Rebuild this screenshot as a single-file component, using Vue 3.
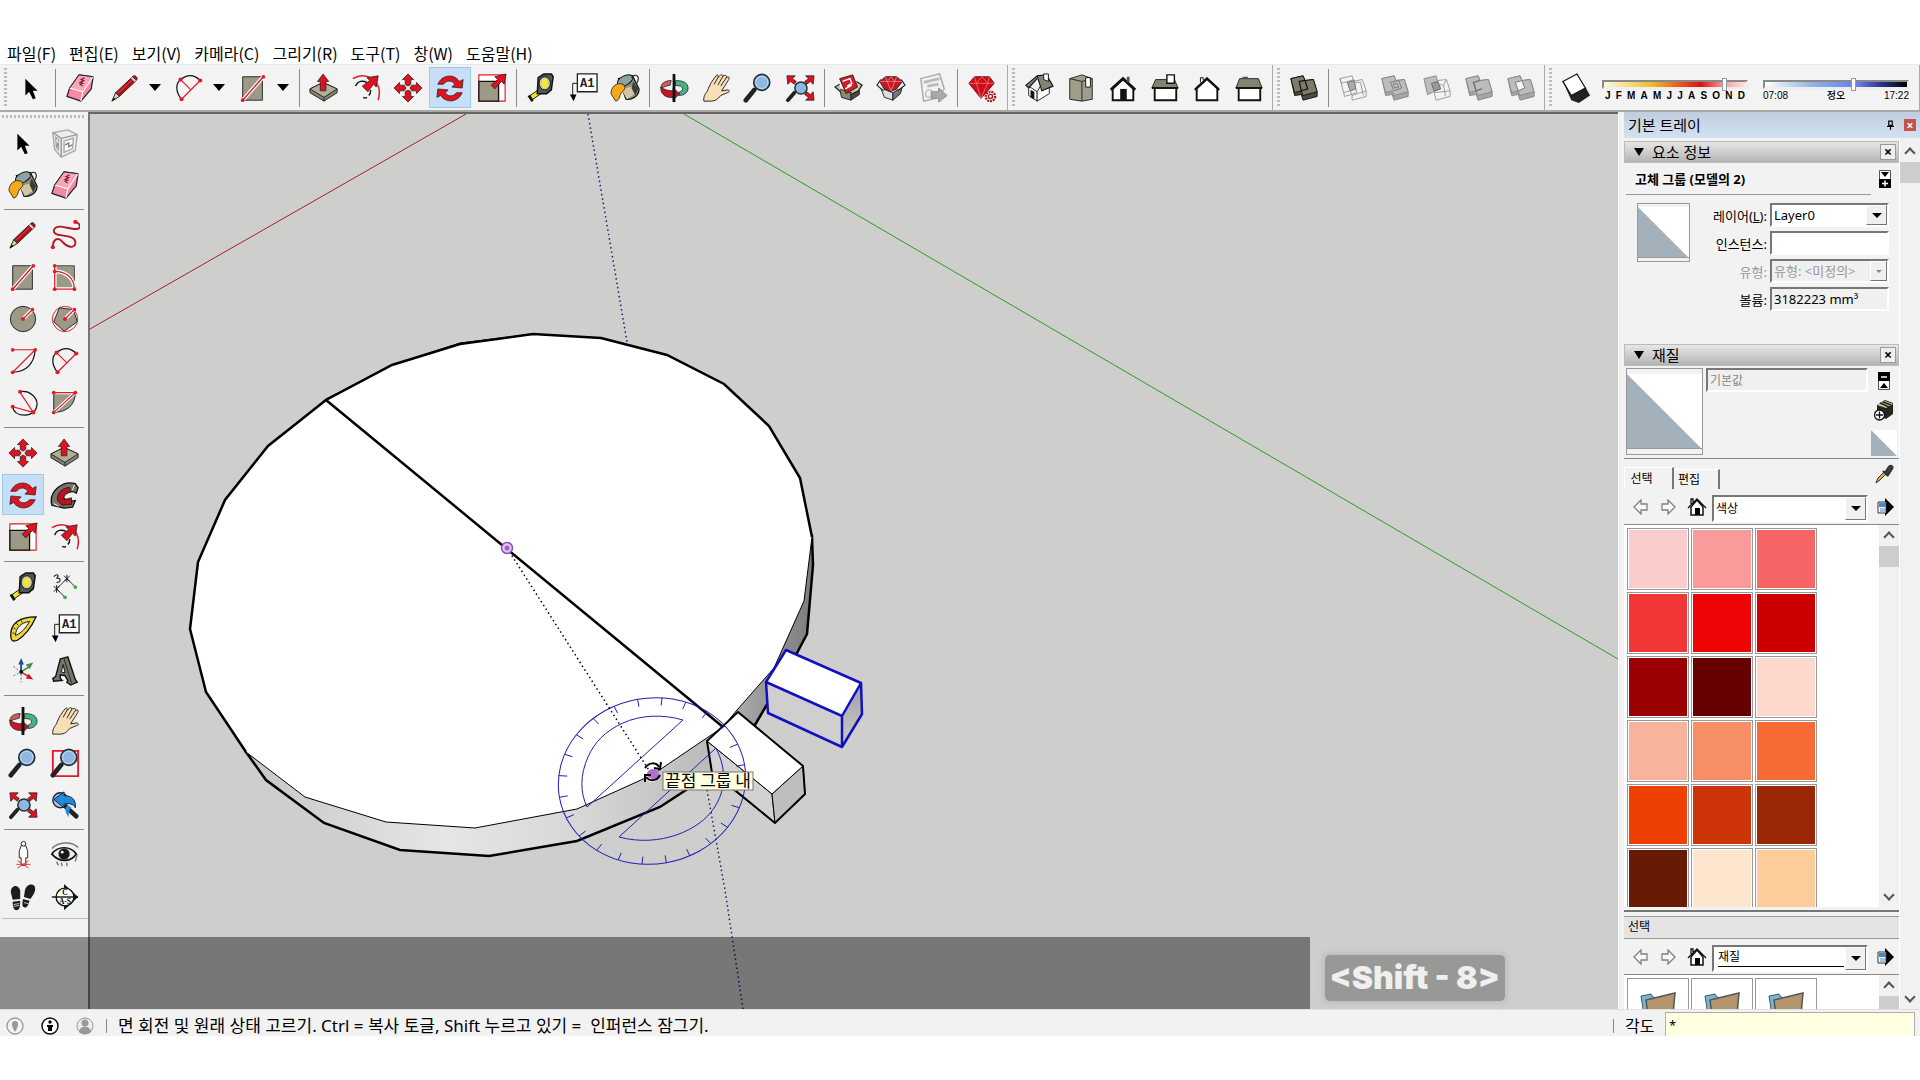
<template>
  <div class="app">
    <!-- Icon sprite, every symbol drawn on a 32x32 grid -->
    <svg class="sprite" aria-hidden="true">
      <symbol id="i-select" viewBox="0 0 32 32">
        <path d="M10 6v18l4-4 4 8 3-1-3-8h5z" fill="#000" />
      </symbol>
      <symbol id="i-eraser" viewBox="0 0 32 32">
        <path d="M15 2 30 4 28 17 17 30 2 25 5 16z" fill="#f58aa5" stroke="#222" stroke-width="1.300" stroke-linejoin="round" />
        <path d="M15 2 30 4 19 20 5 16z" fill="#f9a5ba" />
        <path d="M5 16 19 20 30 4M19 20 17 30" fill="none" stroke="#fff" stroke-width="1.200" />
        <path d="M5 16 15 2 30 4" fill="none" stroke="#222" />
        <path d="m21 5-4 2 3 1-4 2 3 1-3 1 3 2" fill="none" stroke="#7a1c30" stroke-width="1.200" />
      </symbol>
      <symbol id="i-pencil" viewBox="0 0 32 32">
        <path d="M24 4c2-3 7 1 4 4L10 25l-4-4z" fill="#b4121b" stroke="#222" />
        <path d="m6 21-4 9 8-5z" fill="#e4cfa4" stroke="#222" />
        <path d="m2 30 2-4 2 2z" fill="#111" />
        <path d="m23 5 4 4" stroke="#ddd" stroke-width="2" />
        <path d="M8 22 23 8" stroke="#e8494c" />
      </symbol>
      <symbol id="i-freehand" viewBox="0 0 32 32">
        <path d="M3 29c0-9 6-11 10-6 5 6 13 8 14 2 1-7-9-8-17-9C1 15 3 7 11 7c6 0 20 6 21 0 0-3-2-4-5-5" fill="none" stroke="#b01722" stroke-width="2" />
        <circle cx="3" cy="29" r="2.200" fill="#e01b2a" /><circle cx="27" cy="2" r="2.200" fill="#e01b2a" />
      </symbol>
      <symbol id="i-rect" viewBox="0 0 32 32">
        <path d="M5 4h21v25H5z" fill="#9c9a86" stroke="#222" />
        <path d="M5 29 27 4" stroke="#fff" stroke-width="4" /><path d="M5 29 27 4" stroke="#e01b2a" stroke-width="1.500" />
        <circle cx="5" cy="29" r="2" fill="#e01b2a" /><circle cx="27" cy="4" r="2" fill="#e01b2a" />
      </symbol>
      <symbol id="i-rotrect" viewBox="0 0 32 32">
        <path d="M5 4h21v25H5z" fill="#9c9a86" stroke="#444" />
        <path d="M5 4v25h21c0-12-9-19-21-19" fill="none" stroke="#fff" stroke-width="4" />
        <path d="M5 4v25h21c0-12-9-19-21-19" fill="none" stroke="#e01b2a" stroke-width="1.300" />
        <g fill="#e01b2a"><circle cx="5" cy="4" r="2" /><circle cx="5" cy="10" r="2" /><circle cx="5" cy="29" r="2" /><circle cx="26" cy="29" r="2" /></g>
      </symbol>
      <symbol id="i-circle" viewBox="0 0 32 32">
        <circle cx="16" cy="16" r="13.500" fill="#9c9a86" stroke="#222" />
        <path d="m16 16 10-10" stroke="#fff" stroke-width="4" /><path d="m16 16 10-10" stroke="#e01b2a" stroke-width="1.500" />
        <circle cx="16" cy="16" r="2.200" fill="#e01b2a" /><circle cx="26" cy="6" r="2" fill="#e01b2a" />
      </symbol>
      <symbol id="i-polygon" viewBox="0 0 32 32">
        <circle cx="16" cy="16" r="13.500" fill="none" stroke="#e01b2a" />
        <path d="M10 4 25 6l4 13-14 10L4 19z" fill="#9c9a86" stroke="#222" />
        <path d="m16 16 10-10" stroke="#fff" stroke-width="4" /><path d="m16 16 10-10" stroke="#e01b2a" stroke-width="1.500" />
        <circle cx="16" cy="16" r="2.200" fill="#e01b2a" /><circle cx="26" cy="6" r="2" fill="#e01b2a" />
      </symbol>
      <symbol id="i-arc" viewBox="0 0 32 32">
        <path d="M29 4C28 18 20 28 5 28" fill="none" stroke="#111" stroke-width="1.300" />
        <path d="M5 4h24L5 28" fill="none" stroke="#e01b2a" stroke-width="1.300" />
        <g fill="#e01b2a"><circle cx="5" cy="4" r="2" /><circle cx="29" cy="4" r="2" /><circle cx="5" cy="28" r="2" /></g>
      </symbol>
      <symbol id="i-arc2" viewBox="0 0 32 32">
        <path d="M8 28C1 19 2 11 7 7s13-7 21 1" fill="none" stroke="#111" stroke-width="1.300" />
        <path d="M8 28 28 8M7 7l11 11" stroke="#e01b2a" stroke-width="1.300" />
        <g fill="#e01b2a"><circle cx="7" cy="7" r="2.200" /><circle cx="28" cy="8" r="2.200" /><circle cx="8" cy="28" r="2.200" /></g>
      </symbol>
      <symbol id="i-arc3" viewBox="0 0 32 32">
        <path d="M13 4c10-2 18 6 18 13S25 29 18 29 6 26 5 20" fill="none" stroke="#111" stroke-width="1.300" />
        <path d="m13 5 14 21-22-6" fill="none" stroke="#e01b2a" stroke-width="1.300" />
        <g fill="#e01b2a"><circle cx="13" cy="4" r="2.200" /><circle cx="27" cy="26" r="2.200" /><circle cx="5" cy="20" r="2.200" /></g>
      </symbol>
      <symbol id="i-pie" viewBox="0 0 32 32">
        <path d="M4 5h23C27 18 18 26 4 26z" fill="#9c9a86" stroke="#222" />
        <path d="M4 26 27 5H4" fill="none" stroke="#fff" stroke-width="3.500" /><path d="M4 26 27 5H4" fill="none" stroke="#e01b2a" stroke-width="1.300" />
        <g fill="#e01b2a"><circle cx="4" cy="5" r="2" /><circle cx="27" cy="5" r="2" /><circle cx="4" cy="26" r="2" /></g>
      </symbol>
      <symbol id="i-push" viewBox="0 0 32 32">
        <path d="m1 17 14-7 15 7v4L16 30 1 21z" fill="#85836f" stroke="#222" stroke-linejoin="round" />
        <path d="m1 17 14-7 15 7-14 9z" fill="#b0ae99" stroke="#222" stroke-linejoin="round" /><path d="M16 26v4" stroke="#222" />
        <path d="M12 19V9H9l6-8 6 8h-3v10z" fill="#e01220" stroke="#222" stroke-width="0.800" />
      </symbol>
      <symbol id="i-offset" viewBox="0 0 32 32">
        <path d="M2 6C16-3 35 8 29 29" fill="none" stroke="#e01b2a" stroke-width="1.600" />
        <path d="M5 14c2-6 8-6 12-4M19 24c2-2 2-4 2-6M13 26c2 1 3 1 4 0" fill="none" stroke="#111" stroke-width="1.500" />
        <path d="m12 14 8-6-3-3 12-2-2 12-3-3-6 8z" fill="#e01220" stroke="#222" stroke-width="0.800" />
      </symbol>
      <symbol id="i-move" viewBox="0 0 32 32">
        <g fill="#e01220" stroke="#222" stroke-width="0.800">
          <path id="mv" d="M13 12V7h-3l6-6 6 6h-3v5l-3 2z" />
          <use href="#mv" transform="rotate(90 16 16)" /><use href="#mv" transform="rotate(180 16 16)" /><use href="#mv" transform="rotate(270 16 16)" />
        </g>
      </symbol>
      <symbol id="i-rotate" viewBox="0 0 32 32">
        <g fill="#e01220" stroke="#222" stroke-width="0.800" stroke-linejoin="round">
          <path id="rt" d="M3 12C7 2 20 0 26 9l4-2-1 9-11-1 3-3c-3-5-9-4-12 0z" /><use href="#rt" transform="rotate(180 16 16.500)" />
        </g>
      </symbol>
      <symbol id="i-scale" viewBox="0 0 32 32">
        <path d="M2 2h28v28H2z" fill="#fff" stroke="#e01b2a" stroke-width="1.200" />
        <path d="M2 9h21v21H2z" fill="#9c9a86" stroke="#111" stroke-width="1.400" />
        <path d="m15 13 7-6-3-3 12-3-2 11-3-3-7 8z" fill="#e01220" stroke="#222" stroke-width="0.800" />
      </symbol>
      <symbol id="i-follow" viewBox="0 0 32 32">
        <path d="M2 27C-2 12 14 0 27 4l3 4-2 6c-6-4-14 1-14 5l6 4 7-1-3 7-9 1z" fill="#77756a" stroke="#111" stroke-width="1.400" />
        <path d="M8 22c-1-8 5-14 13-14l1 5c-5 1-8 4-7 8l8-2v7l-10 1z" fill="#b8141f" stroke="#111" stroke-width="0.800" />
        <path d="M4 25 9 28M26 5l-2 6" stroke="#fff" />
      </symbol>
      <symbol id="i-tape" viewBox="0 0 32 32">
        <path d="m3 25 13-9 3 4L6 29z" fill="#f2e02c" stroke="#111" /><path d="m3 24 4 6" stroke="#111" stroke-width="3" />
        <path d="M13 5 19 1h8l2 3-2 14-5 4H12z" fill="#55554c" stroke="#111" stroke-width="1.600" />
        <ellipse cx="20" cy="11" rx="6" ry="7" fill="#c8c8b8" stroke="#111" /><ellipse cx="20" cy="11" rx="3.500" ry="5" fill="#f5e62e" />
      </symbol>
      <symbol id="i-text" viewBox="0 0 32 32">
        <path d="M10 1h21v19H10z" fill="#fff" stroke="#222" stroke-width="1.400" />
        <path d="M10 11H5v14" fill="none" stroke="#111" /><path d="M2 23h7l-3 7z" fill="#000" />
        <text x="20.500" y="15" text-anchor="middle" font-family="Liberation Mono, monospace" font-size="13" font-weight="bold" fill="#222">A1</text>
      </symbol>
      <symbol id="i-paint" viewBox="0 0 32 32">
        <path d="m9 6 15-3 7 14c0 8-8 12-14 11z" fill="#8f8d7d" stroke="#111" stroke-width="1.300" />
        <path d="m12 17 13-3 2 8-9 6z" fill="#d3c7a1" /><path d="m25 9 5 8-3 7-4-8z" fill="#3b3b38" />
        <ellipse cx="16" cy="8" rx="9" ry="5" transform="rotate(-28 16 8)" fill="#8da3a3" stroke="#111" />
        <path d="M14 12C6 9 1 16 1 22l5 8c5-1 4-7 7-10 3-2 4-5 1-8z" fill="#f6a81b" stroke="#111" stroke-width="0.800" />
        <path d="M23 5c5-6 10-1 5 7" fill="none" stroke="#222" stroke-width="1.200" />
      </symbol>
      <symbol id="i-orbit" viewBox="0 0 32 32">
        <path d="M18 8c8 0 13 3 13 8s-4 8-10 8l1-4c4-1 4-4 1-6l-6-1z" fill="#4fae7d" stroke="#123" stroke-width="0.800" />
        <path d="M13 8C5 8 2 12 2 16l6-2 4-1z" fill="#cd5a5e" stroke="#222" stroke-width="0.800" />
        <path d="M2 15c-1 8 6 12 13 11v3l7-7-7-6v3c-5 0-9-1-13-4z" fill="#c4152a" stroke="#222" stroke-width="0.800" />
        <path d="M16 1v30" stroke="#111" stroke-width="3" />
      </symbol>
      <symbol id="i-pan" viewBox="0 0 32 32">
        <path d="M3 30c-1-7 4-9 5-14l3-6 5-7c2-2 3 0 2 2 3-4 6-4 5-1 3-3 5-1 4 1 3-2 4 0 2 3l-7 11 7-1c2 1 1 3-1 3l-7 3c-3 4-6 6-10 6z" fill="#f7deb5" stroke="#222" />
        <path d="m18 5-4 7M23 4l-5 9M27 5l-6 9" stroke="#222" fill="none" />
      </symbol>
      <symbol id="i-zoom" viewBox="0 0 32 32">
        <path d="m3 29 9-11" stroke="#222" stroke-width="5" stroke-linecap="round" /><path d="m11 19 3-3" stroke="#222" stroke-width="2" />
        <circle cx="20" cy="10" r="8.500" fill="#8fb7df" stroke="#20303c" stroke-width="1.800" /><circle cx="20" cy="10" r="6.500" fill="none" stroke="#c5dcf2" />
      </symbol>
      <symbol id="i-zoomwin" viewBox="0 0 32 32">
        <path d="M3 3h27v27H3z" fill="none" stroke="#e01b2a" stroke-width="2" />
        <use href="#i-zoom" width="32" height="32" />
      </symbol>
      <symbol id="i-extents" viewBox="0 0 32 32">
        <path d="m3 29 7-8" stroke="#222" stroke-width="4" stroke-linecap="round" />
        <circle cx="17" cy="16" r="6.500" fill="#8fb7df" stroke="#20303c" stroke-width="1.600" />
        <g fill="#e01220" stroke="#222" stroke-width="0.800">
          <path id="ex" d="m21 9 4-3-3-3h9l-1 9-3-3-4 3z" /><use href="#ex" transform="matrix(-1 0 0 1 33 0)" /><use href="#ex" transform="matrix(1 0 0 -1 0 32)" />
        </g>
      </symbol>
      <symbol id="i-prev" viewBox="0 0 32 32">
        <circle cx="11" cy="11" r="8" fill="#a9c4dc" stroke="#223" stroke-width="1.500" />
        <path d="m17 18 11 10" stroke="#222" stroke-width="5" stroke-linecap="round" />
        <path d="m4 10 11-8v4c8 0 13 4 12 13-2-4-6-5-12-4v4z" fill="#2488d8" stroke="#123" /><path d="M19 16c-4 3-3 8 1 13 0-5 0-8 3-10z" fill="#2488d8" />
      </symbol>
      <symbol id="i-warehouse" viewBox="0 0 32 32">
        <path d="m6 17 12 4v8L8 26z" fill="#8c8873" stroke="#222" /><path d="m18 21 9-6v8l-9 6z" fill="#4a483c" stroke="#222" />
        <path d="m6 12-5 3 6 5M24 9l6 4-4 6-8 4" fill="#c9c5ae" stroke="#222" stroke-width="1.300" />
        <path d="m6 6 14-4 5 13-12 7z" fill="#d71a23" stroke="#222" />
        <path d="m9 9 8-3 2 5-5 3M12 17l7-4" stroke="#fff" stroke-width="1.500" fill="none" />
      </symbol>
      <symbol id="i-extwarehouse" viewBox="0 0 32 32">
        <path d="m5 16 13 5v8L9 26z" fill="#ddd" stroke="#222" /><path d="m18 21 10-6-2 7-8 7z" fill="#777" stroke="#222" />
        <path d="m5 7-4 6 7 6M27 7l4 6-8 6" fill="#eee" stroke="#222" stroke-width="1.200" />
        <path d="m4 9 6-5h12l6 5-6 8-7 3-7-4z" fill="#c41822" stroke="#222" /><path d="M4 9h24M10 4l2 5 4 10 4-10 2-5M12 9l4-5 4 5" stroke="#ff8a8a" fill="none" stroke-width="0.800" />
      </symbol>
      <symbol id="i-layout" viewBox="0 0 32 32">
        <path d="m3 6 20-5 5 16-9 10-13 3z" fill="#f2f2f2" stroke="#aaa" stroke-width="1.500" /><path d="m6 10 17-4M10 14l12-2" stroke="#bbb" stroke-width="3" />
        <circle cx="12" cy="22" r="4" fill="none" stroke="#bbb" stroke-width="1.500" />
        <path d="M14 20h8v-4l9 8-9 7v-4h-8z" fill="#aaa" stroke="#8b8b8b" />
      </symbol>
      <symbol id="i-ruby" viewBox="0 0 32 32">
        <path d="m2 11 6-7h16l5 7-14 16z" fill="#c9101c" stroke="#7c0a12" />
        <path d="M2 11h27M8 4l2 7 5 16 7-16 2-7M10 11l6-7 6 7" fill="none" stroke="#ff6a6a" stroke-width="0.900" />
        <circle cx="25" cy="25" r="5" fill="#f3f3f3" stroke="#a81820" stroke-width="2.500" stroke-dasharray="2 1" /><circle cx="25" cy="25" r="2.200" fill="none" stroke="#a81820" stroke-width="1.500" />
      </symbol>
      <symbol id="i-iso" viewBox="0 0 32 32">
        <path d="m5 14 9 6v10L5 24z" fill="#fff" stroke="#222" /><path d="m14 30 13-8V13L21 8l-7 12z" fill="#fff" stroke="#222" />
        <path d="M7 18v8l4 2v-8z" fill="#111" /><path d="M14 3 2 13l3 3 9-10M14 3l10-1 7 12-12 5z" fill="#85836f" stroke="#111" stroke-width="1.200" />
        <path d="M21 1h5v8l-5-2z" fill="#fff" stroke="#111" />
      </symbol>
      <symbol id="i-top" viewBox="0 0 32 32">
        <path d="m4 6 13-4 11 4v22l-11 2-13-2z" fill="#a09e8a" stroke="#222" /><path d="M17 9v21M4 6l13 3 11-3" stroke="#222" fill="none" />
        <path d="M21 5h5v10h-5z" fill="#fff" stroke="#111" />
      </symbol>
      <symbol id="i-front" viewBox="0 0 32 32">
        <path d="M5 16 16 6l11 10v13H5z" fill="#fff" stroke="#111" stroke-width="2" /><path d="M3 18 16 6l13 12" fill="none" stroke="#111" stroke-width="3" />
        <path d="M13 17h7v12h-7z" fill="#111" /><path d="M20 4h3v6h-3z" fill="#555" />
      </symbol>
      <symbol id="i-right" viewBox="0 0 32 32">
        <path d="M5 15h23v14H5z" fill="#fff" stroke="#111" stroke-width="2" /><path d="m6 7-4 9h28l-4-9z" fill="#85836f" stroke="#222" />
        <path d="M2 16h28" stroke="#111" stroke-width="2" /><path d="M18 2h8v9h-8z" fill="#fff" stroke="#111" stroke-width="1.500" />
      </symbol>
      <symbol id="i-back" viewBox="0 0 32 32">
        <path d="M5 16 16 6l11 10v13H5z" fill="#fff" stroke="#111" stroke-width="2" /><path d="M3 18 16 6l13 12" fill="none" stroke="#111" stroke-width="2.500" />
        <path d="M9 10V5h3v3" fill="#fff" stroke="#111" />
      </symbol>
      <symbol id="i-left" viewBox="0 0 32 32">
        <path d="M5 15h23v14H5z" fill="#fff" stroke="#111" stroke-width="2" /><path d="m6 6-4 10h28l-4-10z" fill="#85836f" stroke="#222" />
        <path d="M2 16h28" stroke="#111" stroke-width="2" /><path d="M9 4h6v2H9z" fill="#555" />
      </symbol>
      <symbol id="i-shell" viewBox="0 0 32 32">
        <path d="m2 6 13-3 2 5 9-1 4 13v5l-15 4-2-6-7 1z" fill="#4d4b40" stroke="#111" stroke-linejoin="round" />
        <path d="m2 6 13-3 2 5 9-1 4 13-15 4-2-5-7 2z" fill="#7e7b69" stroke="#111" /><path d="m11 9 6-1 3 9-7 2z" fill="none" stroke="#111" stroke-width="1.300" />
      </symbol>
      <symbol id="i-intersect" viewBox="0 0 32 32">
        <path d="m2 6 13-3 4 14-13 4zM10 10l16-3 4 12-15 5zM6 21l1 4 13-4-1-4M15 24v5l15-4v-6M2 6l2 5 13-4 2 10M10 10l14 0 3 14" fill="none" stroke="#999" />
        <path d="m10 10 7-2 2 9-6 2z" fill="#aaa" stroke="#777" />
      </symbol>
      <symbol id="i-union" viewBox="0 0 32 32">
        <path d="m2 6 13-3 2 5 9-1 4 13v5l-15 4-2-6-7 1z" fill="#a5a5a5" stroke="#888" />
        <path d="m2 6 13-3 2 5 9-1 4 13-15 4-2-5-7 2z" fill="#bcbcbc" stroke="#888" /><path d="m11 10 9-2 3 8-8 3zM14 12l4-1 2 4-4 1z" fill="none" stroke="#777" />
      </symbol>
      <symbol id="i-subtract" viewBox="0 0 32 32">
        <path d="m2 6 13-3 4 14-13 6z" fill="#bcbcbc" stroke="#888" /><path d="m10 11 7-2 3 8-7 2z" fill="#999" stroke="#666" />
        <path d="m17 8 9-1 4 12v6l-15 4-2-8 17-2M26 7l-3 6 2 12M10 11l13 2" fill="none" stroke="#999" />
      </symbol>
      <symbol id="i-trim" viewBox="0 0 32 32">
        <path d="m2 6 13-3 2 5 9-1 4 13v5l-15 4-2-6-7 1z" fill="#a5a5a5" stroke="#888" />
        <path d="m2 6 13-3 2 5 9-1 4 13-15 4-2-5-7 2z" fill="#bcbcbc" stroke="#888" /><path d="m17 8-7 2 3 9 6-2" fill="none" stroke="#666" stroke-width="1.300" />
      </symbol>
      <symbol id="i-split" viewBox="0 0 32 32">
        <path d="m2 6 13-3 2 5 9-1 4 13v5l-15 4-2-6-7 1z" fill="#a5a5a5" stroke="#888" />
        <path d="m2 6 13-3 2 5 9-1 4 13-15 4-2-5-7 2z" fill="#bcbcbc" stroke="#888" /><path d="m10 10 7-2 3 8-7 3z" fill="#f3f3f3" stroke="#777" />
      </symbol>
      <symbol id="i-shadow" viewBox="0 0 32 32">
        <path d="m2 9 9 20 8 3 12-8-5-9z" fill="#222" /><path d="m2 9 15-8 9 15-15 8z" fill="#fff" stroke="#111" stroke-width="1.300" />
      </symbol>
      <symbol id="i-component" viewBox="0 0 32 32">
        <path d="m3 5 16-3 10 5-2 17-15 7-7-8z" fill="#eee" stroke="#aaa" stroke-width="1.500" /><path d="m3 5 9 6 17-4M12 11v20" fill="none" stroke="#999" stroke-width="1.500" />
        <path d="m15 14 10-3-1 11-9 4zM6 10l3 2v11l-2-2z" fill="#fff" stroke="#aaa" stroke-width="1.500" /><path d="m16 18 4-2v4l4-2M8 16v4" stroke="#888" stroke-width="1.500" fill="none" />
      </symbol>
      <symbol id="i-dimension" viewBox="0 0 32 32">
        <path d="m7 18 11-11M7 18l9 9M18 7l9 9" fill="none" stroke="#222" /><path d="m4 15 6 6M4 21l6-6M7 14v8M15 4l6 6M15 10l6-6M18 3v8" stroke="#111" />
        <circle cx="16" cy="27" r="2" fill="#3fae49" /><circle cx="27" cy="16" r="2" fill="#3fae49" />
        <path d="M4 5c4-4 6-1 3 2 5-2 5 5 0 4" fill="none" stroke="#222" stroke-width="1.200" />
      </symbol>
      <symbol id="i-protractor" viewBox="0 0 32 32">
        <path d="M3 24C2 10 12 3 30 3 25 14 20 22 10 28c-5 2-7 0-7-4z" fill="#ecd63a" stroke="#111" stroke-width="1.400" /><path d="M8 23c0-8 6-14 15-15-4 7-8 12-15 15z" fill="#f3f3f3" stroke="#111" />
        <path d="m5 20 2 1M6 15l2 1M9 10l2 2M14 7l1 2" stroke="#111" />
      </symbol>
      <symbol id="i-axes" viewBox="0 0 32 32">
        <path d="m14 17 9-6" stroke="#2f8d38" stroke-width="1.500" /><path d="m19 9 8-2-4 7z" fill="#3b9a42" /><path d="m14 17 8 5" stroke="#c21" stroke-width="1.500" /><path d="m19 24 3-5 5 6z" fill="#d3161c" />
        <path d="M14 17V8" stroke="#1e4c96" stroke-width="2" /><path d="m11 9 3-7 3 7z" fill="#1e4c96" />
        <path d="M14 19v9" stroke="#1e4c96" stroke-dasharray="2 2" /><path d="m6 11 8 6" stroke="#c21" stroke-dasharray="2 2" /><path d="m6 21 8-4" stroke="#2f8d38" stroke-dasharray="2 2" /><circle cx="14" cy="17" r="2" fill="#111" />
      </symbol>
      <symbol id="i-text3d" viewBox="0 0 32 32">
        <path d="m11 3 8-2 8 24 2 3-7 3-4-3 1-2-3-5-5-1v4l2 2-9 1-1-3 3-2z" fill="#77756a" stroke="#111" stroke-width="1.500" /><path d="m14 9-2 8 4 1z" fill="#f3f3f3" stroke="#111" /><path d="m15 3 8 26" stroke="#222" fill="none" />
      </symbol>
      <symbol id="i-position" viewBox="0 0 32 32">
        <path d="M14 6h5l2 6v7h-2v8h-5v-8h-2v-7z" fill="#fff" stroke="#222" /><circle cx="16.500" cy="4" r="2.500" fill="#fff" stroke="#222" /><path d="m10 22 12 8M22 22l-12 8M9 26h15" stroke="#e33" />
      </symbol>
      <symbol id="i-look" viewBox="0 0 32 32">
        <path d="M2 15C8 6 22 6 28 15c-5 8-17 10-26 0z" fill="#eee" stroke="#111" stroke-width="1.800" /><circle cx="15" cy="15" r="6" fill="#1a1a1a" /><circle cx="13" cy="13" r="1.500" fill="#fff" />
        <path d="M2 9C9 2 23 1 30 8M7 23l2 4M12 24l1 4M18 24l0 4M29 15l-2 8" stroke="#777" stroke-width="1.500" fill="none" />
      </symbol>
      <symbol id="i-walk" viewBox="0 0 32 32">
        <path d="M3 11c0-8 8-9 10-2v9l-8 1zM5 21l8-1c0 8-1 10-4 10s-4-4-4-9zM18 9c2-8 11-8 11-2 0 5-3 8-5 11l-7-2zM16 18l7 2c-2 7-4 8-6 7s-2-4-1-9z" fill="#1d1d1d" /><path d="m6 24 6-1M6 26l6-1M17 22l5 1" stroke="#ccc" />
      </symbol>
      <symbol id="i-section" viewBox="0 0 32 32">
        <path d="m15 2 15 14-15 14z" fill="#111" /><circle cx="16" cy="16" r="9.500" fill="#fff" stroke="#111" stroke-width="1.500" /><path d="M2 16h28" stroke="#111" stroke-width="1.500" />
        <g font-family="Liberation Serif, serif" font-size="8" font-weight="bold" text-anchor="middle"><text x="16" y="14">C</text><text x="16" y="23">A-S</text></g>
      </symbol>

      <!-- Tray icons -->
      <symbol id="i-prevnav" viewBox="0 0 16 16"><path d="M1 8 8 1v4h6v6H8v4z" fill="#f8f8f8" stroke="#808080" stroke-width="1.300" /></symbol>
      <symbol id="i-nextnav" viewBox="0 0 16 16"><path d="M15 8 8 1v4H2v6h6v4z" fill="#f8f8f8" stroke="#808080" stroke-width="1.300" /></symbol>
      <symbol id="i-home" viewBox="0 0 20 20"><path d="M4 10v8h12v-8l-6-7z" fill="#fff" stroke="#111" stroke-width="1.500" /><path d="m1 11 9-9 9 9M4 7V2h2v3" fill="none" stroke="#111" stroke-width="1.300" /><path d="M8 11h5v7H8z" /></symbol>
      <symbol id="i-detail" viewBox="0 0 18 18"><path d="m8 0 9 9-9 9z" fill="#000" /><path d="M1 4h8v11H1z" fill="#fff" stroke="#333" /><path d="M2 5h7v4H2z" fill="#4b86c8" /><path d="M3 11h5M3 13h5" stroke="#4b86c8" /></symbol>
      <symbol id="i-dropper" viewBox="0 0 20 20"><path d="m2 19 2-5 7-7 2 2-7 7z" fill="#dcae3c" stroke="#333" /><path d="m9 7 5 5M11 9l3-5c2-4 6-2 4 1l-4 6z" fill="#444" stroke="#333" stroke-width="2" /></symbol>
      <symbol id="i-newmat" viewBox="0 0 22 22"><path d="M4 6 12 1l8 3v11l-7 5-9-4z" fill="#25251f" /><path d="m4 6 8-4 8 3-7 4z" fill="#d4cf9a" /><path d="m7 4 9 4M10 3l8 3M13 12l7-5M13 16l7-5" stroke="#25251f" stroke-width="1.500" /><circle cx="6.500" cy="16" r="5" fill="#fff" stroke="#111" stroke-width="1.300" /><path d="M3 16h7M6.500 12.500v7" stroke="#111" stroke-width="1.300" /></symbol>
      <symbol id="i-folder" viewBox="0 0 36 24"><path d="M1 5 11 3l2 3 4 1v17H4z" fill="#7fb3d3" stroke="#456" /><path d="m6 9 29-7-2 22H8z" fill="#b3966c" stroke="#555" stroke-width="1.500" /></symbol>
    </svg>

    <nav class="menubar">
      <button v-for="m in menus" :key="m" class="menu-item">{{ m }}</button>
    </nav>

    <header class="toolbar">
      <div v-for="(group, g) in toolbars" :key="g" class="group">
        <span class="grip"></span>
        <template v-for="(t, i) in group" :key="i">
          <span v-if="t === '|'" class="vsep"></span>
          <span v-else class="tool-wrap" :class="{ spaced: t === 'eraser' }">
            <button class="tool" :class="{ active: t === activeTool }" :aria-label="t" @click="activeTool = t">
              <svg><use :href="'#i-' + t" /></svg>
            </button>
            <button v-if="dropdowns.includes(t)" class="tool-drop" :aria-label="t + ' menu'"></button>
          </span>
        </template>
      </div>
      <div class="group last">
        <span class="grip"></span>
        <button class="tool" aria-label="shadow"><svg><use href="#i-shadow" /></svg></button>
        <div class="slider-box">
          <input v-model="month" class="slider month" type="range" min="0" max="100" aria-label="month">
          <div class="ticks"><span v-for="(c, i) in 'JFMAMJJASOND'" :key="i">{{ c }}</span></div>
        </div>
        <div class="slider-box">
          <input v-model="time" class="slider time" type="range" min="0" max="100" aria-label="time">
          <div class="ticks"><span>07:08</span><span>정오</span><span>17:22</span></div>
        </div>
      </div>
    </header>

    <main class="work">
      <aside class="side">
        <span class="hgrip"></span>
        <div v-for="(block, b) in sideTools" :key="b" class="side-block">
          <button
            v-for="t in block"
            :key="t"
            class="tool"
            :class="{ active: t === activeTool }"
            :aria-label="t"
            @click="activeTool = t"
          ><svg><use :href="'#i-' + t" /></svg></button>
        </div>
      </aside>

      <section class="viewport">
        <svg class="scene" viewBox="90 114 1528 895" preserveAspectRatio="xMinYMin slice">
          <defs>
            <linearGradient id="side" x1="0" y1="0" x2="1" y2="0">
              <stop offset="0" stop-color="#c6c6c6" />
              <stop offset="0.35" stop-color="#e6e6e6" />
              <stop offset="0.6" stop-color="#d6d6d6" />
              <stop offset="0.82" stop-color="#bababa" />
              <stop offset="1" stop-color="#7c7c7c" />
            </linearGradient>
            <linearGradient id="boxSide" x1="0" y1="0" x2="0" y2="1">
              <stop offset="0" stop-color="#a0a0a0" />
              <stop offset="1" stop-color="#cccccc" />
            </linearGradient>
          </defs>

          <!-- Axes -->
          <path d="M90 329 466 114" stroke="#a82020" />
          <path d="M684 114 1618 659" stroke="#2c9c2c" />
          <path d="M588 114 627 342M707 790 725 890 743 1009" stroke="#1c1c78" stroke-width="1.500" stroke-dasharray="1.500 3" fill="none" />

          <!-- Disc -->
          <path d="M246 752 266 780 324 823 400 850 489 856 577 841 660 807 712 773 755 725 797 653 807 634 813 565 812 537 700 600z" fill="url(#side)" stroke="#000" stroke-width="2.500" />
          <path d="M533 334 601 338 667 355 724 384 769 426 800 478 812 537 804 601 774 668 737 710 723 727 652 775 577 809 475 828 386 822 305 797 246 752 206 692 190 629 198 562 225 500 268 446 326 399 392 365 460 343z" fill="#fff" stroke="#000" />
          <path d="M246 752 206 692 190 629 198 562 225 500 268 446 326 400 392 365 460 344 533 334 601 338 667 355 724 384 769 426 800 478 812 537" fill="none" stroke="#000" stroke-width="2.500" />
          <path d="M326 400 723 727" stroke="#000" stroke-width="2.500" />

          <!-- Group next to the edge -->
          <path d="M707 741 772 794 775 823 712 773z" fill="#d2d2d2" stroke="#000" />
          <path d="M772 794 803 766 805 794 775 823z" fill="#bebebe" stroke="#000" />
          <path d="M707 741 738 712 803 766 772 794z" fill="#fff" stroke="#000" />
          <path d="M712 773 707 741 738 712 803 766 805 794 775 823 736 791" fill="none" stroke="#000" stroke-width="2" />

          <!-- Selected group -->
          <path d="M766 682 842 716 842 747 768 713z" fill="#cfcfcf" />
          <path d="M842 716 861 683 862 714 842 747z" fill="url(#boxSide)" />
          <path d="M786 650 861 683 842 716 766 682z" fill="#fff" />
          <path d="M786 650 861 683 842 716 766 682zM766 682 768 713 842 747V716M842 747 862 714 861 683" fill="none" stroke="#1010c0" stroke-width="2.500" stroke-linejoin="round" />

          <!-- Protractor -->
          <g fill="none" stroke="#2020b0">
            <ellipse cx="652" cy="781" rx="94" ry="83" transform="rotate(-10 652 781)" />
            <path d="M683 720C663 714 640 715 623 723 605 731 594 743 588 757 580 775 580 792 587 807z" />
            <path d="M716 748C727 770 726 790 714 808 700 830 660 848 619 837z" />
            <line v-for="(k, i) in protractorTicks" :key="i" :x1="k.x1" :y1="k.y1" :x2="k.x2" :y2="k.y2" />
          </g>

          <path d="M507 548 652 775" stroke="#000" stroke-width="1.500" stroke-dasharray="1.500 3" />
          <circle cx="507" cy="548" r="5.500" fill="#e4c8f0" stroke="#9050b8" stroke-width="1.500" /><circle cx="507" cy="548" r="2.500" fill="#a45cc8" />

          <circle cx="652" cy="775" r="7" fill="#fff" /><ellipse cx="653" cy="774" rx="6" ry="5" fill="#b070d0" />
          <g fill="none" stroke="#000" stroke-width="2">
            <path d="M645 768c4-6 11-6 14-1M660 775c-3 6-10 7-14 2" /><path d="m661 762-1 7-6-1M645 782v-7h6" />
          </g>

          <rect x="663" y="772" width="90" height="18" fill="#ffffe1" stroke="#77776a" />
          <text x="708" y="787" class="tip-text">끝점 그룹 내</text>
        </svg>
      </section>

      <aside class="tray">
        <div class="tray-title">
          <span class="grow">기본 트레이</span>
          <button class="pin" aria-label="pin"><svg viewBox="0 0 8 11"><path d="M2 1h4v5H2zM0 7h8M4 7v4" fill="none" stroke="#000" stroke-width="1.300" /></svg></button>
          <button class="close-red" aria-label="close">×</button>
        </div>
        <div class="tray-main">
          <div class="tray-content">
            <div class="panel-head">
              <span class="tri"></span><span class="grow">요소 정보</span>
              <button class="panel-close" aria-label="close">×</button>
            </div>
            <div class="entity">
              <div class="entity-title">
                <strong class="grow">고체 그룹 (모델의 2)</strong>
                <svg class="toggle" viewBox="0 0 12 18"><path d="M.500.500h11v17H.500z" fill="#fff" stroke="#555" /><path d="M2 2h8L6 7zM0 9h12v9H0z" /><path d="M3 13.500h6M6 10.500v6" stroke="#fff" stroke-width="1.500" /></svg>
              </div>
              <div class="entity-body">
                <svg class="thumb" viewBox="0 0 52 58"><path d="M0 3h52v51H0z" fill="#fff" /><path d="M0 3 51 54H0z" fill="#a5b1ba" /><path d="M0 54.500h52" stroke="#999" /></svg>
                <div class="fields">
                  <label for="layer">레이어(<u>L</u>):</label>
                  <div class="combo"><select id="layer"><option>Layer0</option></select><span class="combo-arrow"></span></div>
                  <label for="inst">인스턴스:</label>
                  <input id="inst" class="box" type="text">
                  <label for="type" class="off">유형:</label>
                  <div class="combo off"><select id="type" disabled><option>유형: &lt;미정의&gt;</option></select><span class="combo-arrow"></span></div>
                  <label for="vol">볼륨:</label>
                  <input id="vol" class="box flat" type="text" readonly value="3182223 mm³">
                </div>
              </div>
            </div>

            <div class="panel-head">
              <span class="tri"></span><span class="grow">재질</span>
              <button class="panel-close" aria-label="close">×</button>
            </div>
            <div class="material">
              <svg class="preview" viewBox="0 0 75 85"><path d="M0 5h75v74H0z" fill="#fff" /><path d="M0 5 74 79H0z" fill="#a5b1ba" /><path d="M0 79.500h75" stroke="#999" /></svg>
              <input class="box flat name" type="text" disabled value="기본값" aria-label="material name">
              <div class="mat-icons">
                <svg class="toggle" viewBox="0 0 12 18"><path d="M.500.500h11v17H.500z" fill="#fff" stroke="#555" /><path d="M0 0h12v9H0zM2 16h8l-4-5z" /><path d="M3 5h6" stroke="#fff" stroke-width="1.500" /></svg>
                <svg class="ico22"><use href="#i-newmat" /></svg>
                <svg class="ico26" viewBox="0 0 26 26"><path d="M0 0h26v26H0z" fill="#fff" /><path d="m0 0 26 26H0z" fill="#a5b1ba" /></svg>
              </div>
            </div>

            <div class="tabs">
              <button class="tab on">선택</button><button class="tab">편집</button>
              <span class="grow"></span>
              <svg class="ico20"><use href="#i-dropper" /></svg>
            </div>
            <div class="nav-row">
              <button aria-label="back"><svg class="ico16"><use href="#i-prevnav" /></svg></button>
              <button aria-label="forward"><svg class="ico16"><use href="#i-nextnav" /></svg></button>
              <button aria-label="home"><svg class="ico20"><use href="#i-home" /></svg></button>
              <div class="combo"><select aria-label="colors"><option>색상</option></select><span class="combo-arrow"></span></div>
              <button aria-label="details"><svg class="ico18"><use href="#i-detail" /></svg></button>
            </div>

            <div class="list colors">
              <div class="swatches">
                <button v-for="c in colors" :key="c" class="swatch" :style="{ backgroundColor: c }" :aria-label="c"></button>
              </div>
              <div class="scroll"><span class="chev up"></span><span class="knob"></span><span class="chev down"></span></div>
            </div>
            <div class="splitter"></div>
            <div class="sub-head">선택</div>
            <div class="nav-row">
              <button aria-label="back"><svg class="ico16"><use href="#i-prevnav" /></svg></button>
              <button aria-label="forward"><svg class="ico16"><use href="#i-nextnav" /></svg></button>
              <button aria-label="home"><svg class="ico20"><use href="#i-home" /></svg></button>
              <div class="combo lined"><select aria-label="materials"><option>재질</option></select><span class="combo-arrow"></span></div>
              <button aria-label="details"><svg class="ico18"><use href="#i-detail" /></svg></button>
            </div>
            <div class="list folders">
              <div class="swatches">
                <button v-for="n in 3" :key="n" class="folder" :aria-label="'folder ' + n"><svg><use href="#i-folder" /></svg></button>
              </div>
              <div class="scroll"><span class="chev up"></span><span class="knob"></span></div>
            </div>
          </div>
          <div class="scroll outer"><span class="chev up"></span><span class="knob"></span><span class="chev down"></span></div>
        </div>
      </aside>

      <!-- Key press overlay -->
      <div class="band"></div>
      <div class="keys">&lt;Shift - 8&gt;</div>
    </main>

    <footer class="status">
      <svg viewBox="0 0 18 18"><circle cx="9" cy="9" r="8" fill="#f4f4f4" stroke="#999" stroke-width="1.300" /><path d="M9 15C4 7 6 4 9 4s5 3 0 11z" fill="#999" /></svg>
      <svg viewBox="0 0 18 18"><circle cx="9" cy="9" r="8" fill="#fff" stroke="#111" stroke-width="1.500" /><circle cx="9" cy="5" r="1.700" /><path d="M6 8h6v2h-1v4H7v-4H6z" /></svg>
      <svg viewBox="0 0 18 18"><circle cx="9" cy="9" r="8" fill="#eee" stroke="#999" /><circle cx="9" cy="6" r="3.500" fill="#999" /><path d="M3 15c0-7 12-7 12 0-3 3-9 3-12 0z" fill="#999" /></svg>
      <span class="bar"></span>
      <span class="hint">면 회전 및 원래 상태 고르기. Ctrl = 복사 토글, Shift 누르고 있기 =&nbsp; 인퍼런스 잠그기.</span>
      <span class="bar"></span>
      <label for="angle">각도</label>
      <input id="angle" type="text" value="*">
    </footer>
  </div>
</template>

<script setup>
import { ref } from 'vue'

const menus = ['파일(F)', '편집(E)', '보기(V)', '카메라(C)', '그리기(R)', '도구(T)', '창(W)', '도움말(H)']

// '|' is a separator inside a toolbar
const toolbars = [
  ['select', '|', 'eraser', 'pencil', 'arc2', 'rect', '|', 'push', 'offset', 'move', 'rotate', 'scale', '|',
    'tape', 'text', 'paint', '|', 'orbit', 'pan', 'zoom', 'extents', '|', 'warehouse', 'extwarehouse', 'layout', '|', 'ruby'],
  ['iso', 'top', 'front', 'right', 'back', 'left'],
  ['shell', '|', 'intersect', 'union', 'subtract', 'trim', 'split'],
]
const dropdowns = ['pencil', 'arc2', 'rect']

const sideTools = [
  ['select', 'component', 'paint', 'eraser'],
  ['pencil', 'freehand', 'rect', 'rotrect', 'circle', 'polygon', 'arc', 'arc2', 'arc3', 'pie'],
  ['move', 'push', 'rotate', 'follow', 'scale', 'offset'],
  ['tape', 'dimension', 'protractor', 'text', 'axes', 'text3d'],
  ['orbit', 'pan', 'zoom', 'zoomwin', 'extents', 'prev'],
  ['position', 'look', 'walk', 'section'],
]

const colors = [
  '#fbcccc', '#f99b9b', '#f56565',
  '#f23535', '#ee0404', '#cc0003',
  '#9b0003', '#670003', '#fcd9cc',
  '#f9b29b', '#f88e66', '#f66a35',
  '#ef4004', '#cd3409', '#9a2706',
  '#671b04', '#fee5ce', '#fccd9a',
]

const activeTool = ref('rotate')
const month = ref(86)
const time = ref(63)

// One tick every 15 degrees along the protractor rim
const tilt = -10 * Math.PI / 180
const rim = (a, k) => {
  const x = 94 * k * Math.cos(a)
  const y = 83 * k * Math.sin(a)
  return [652 + x * Math.cos(tilt) - y * Math.sin(tilt), 781 + x * Math.sin(tilt) + y * Math.cos(tilt)]
}
const protractorTicks = Array.from({ length: 24 }, (_, i) => {
  const a = i * Math.PI / 12
  const [x1, y1] = rim(a, 1)
  const [x2, y2] = rim(a, 0.91)
  return { x1, y1, x2, y2 }
})
</script>

<style>
body { margin: 0; background: #fff; }
</style>

<style scoped>
.app {
  display: flex;
  flex-direction: column;
  box-sizing: border-box;
  height: 100vh;
  padding: 38px 0 44px;
  font-family: "Noto Sans", "Noto Sans CJK KR", sans-serif;
  font-size: 13px;
  color: #000;
}
.app * { box-sizing: border-box; }
.app .sprite { display: none; }
button { padding: 0; border: 0; background: none; font: inherit; color: inherit; }
select, input { font: inherit; color: inherit; margin: 0; min-width: 0; }
svg { display: block; flex: none; }
.grow { flex: 1; }

.menubar { display: flex; gap: 13px; height: 26px; padding: 0 7px; flex: none; }
.menu-item { height: 29px; font-size: 16px; font-family: "Noto Sans CJK KR", sans-serif; white-space: nowrap; }

/* Top toolbar */
.toolbar {
  display: flex;
  height: 48px;
  flex: none;
  background: #f3f3f3;
  border-top: 1px solid #e8e8e8;
  border-bottom: 2px solid #a8aaa6;
}
.group { display: flex; align-items: center; padding-right: 2px; border-right: 1px solid #aaa; }
.group:first-child { padding-right: 4px; }
.group.last { flex: 1; padding-right: 10px; }
.grip {
  width: 3px; height: 40px;
  margin: 0 3px 0 4px;
  background: repeating-linear-gradient(#bbb 0 2px, transparent 2px 4px);
}
.vsep { width: 1px; height: 38px; margin: 0 3px; background: #8a8a8a; }
.tool-wrap { display: flex; }
.tool-wrap.spaced { margin-right: 3px; }
.tool { display: grid; place-items: center; width: 42px; height: 41px; flex: none; }
.tool svg { width: 30px; height: 30px; }
.tool.active { background: #c6dff7; border: 1px solid #9cc8ee; }
.tool-drop { width: 22px; padding-right: 4px; }
.tool-drop::before {
  content: "";
  display: block;
  width: 0;
  margin: auto;
  border: 6px solid transparent;
  border-top: 7px solid #000;
  border-bottom: 0;
}
.slider-box { flex: 1; margin-left: 5px; padding-top: 6px; }
.slider-box + .slider-box { margin-left: 15px; }
.slider {
  display: block;
  appearance: none;
  width: 100%;
  height: 9px;
  border: 2px solid;
  border-color: #888 #eee #eee #888;
}
.month { background: linear-gradient(90deg, #fff7e0, #ecc02c 33%, #e01010 68%, #f4a0a0 85%, #fde8e8); }
.time { background: linear-gradient(90deg, #fff, #8fb4e0 33%, #6878f0 66%, #2c3484 82%, #000); }
.slider::-webkit-slider-thumb {
  appearance: none;
  width: 5px; height: 13px;
  background: #fff;
  border: 1px solid #999;
}
.ticks { display: flex; justify-content: space-between; padding: 0 3px; margin-top: 1px; font: bold 10px/12px "Liberation Sans", "Noto Sans CJK KR", sans-serif; }
.slider-box + .slider-box .ticks { padding: 0; font-weight: 500; }

/* Left tools */
.work { position: relative; display: flex; flex: 1; min-height: 0; background: #f2f2f2; border-bottom: 1px solid #e0e0e0; }
.side { width: 88px; flex: none; padding: 3px 0 0 2px; }
.hgrip { display: block; height: 3px; width: 82px; margin-bottom: 4px; background: repeating-linear-gradient(90deg, #bbb 0 2px, transparent 2px 4px); }
.side-block { display: grid; grid-template-columns: 42px 42px; grid-auto-rows: 42px; }
.side-block + .side-block { margin-top: 8px; position: relative; }
.side-block + .side-block::before { content: ""; position: absolute; top: -5px; left: 2px; width: 80px; height: 1px; background: #888; }
.side-block:last-child { border-bottom: 1px solid #bbb; }

.viewport { flex: 1; min-width: 0; overflow: hidden; background: #cececd; border-left: 2px solid #777; border-top: 2px solid #666; }
.scene { width: 100%; height: 100%; }
.tip-text { font-family: "Noto Sans CJK KR", sans-serif; font-size: 17px; text-anchor: middle; }

/* Tray */
.tray { display: flex; flex-direction: column; width: 302px; flex: none; padding-left: 5px; border-left: 1px solid #fff; }
.tray-title {
  display: flex;
  align-items: center;
  height: 26px;
  flex: none;
  padding: 0 4px;
  background: linear-gradient(#c0cddc, #d3e2f2);
  font-size: 15px;
  line-height: 20px;
}
.pin svg { width: 7px; height: 10px; }
.close-red { width: 12px; height: 12px; margin-left: 10px; background: #c75050; color: #fff; font-size: 12px; font-weight: bold; line-height: 11px; }
.tray-main { display: flex; flex: 1; min-height: 0; }
.tray-content { display: flex; flex-direction: column; flex: 1; min-width: 0; padding-top: 3px; border-right: 1px solid #fff; }
.panel-head {
  display: flex;
  align-items: center;
  height: 22px;
  flex: none;
  padding: 0 2px 0 9px;
  background: linear-gradient(#e6e6e6, #b4b4b4);
  border: 1px solid #bbb;
  font-size: 15px;
  line-height: 18px;
}
.tri { margin-right: 8px; border: 5px solid transparent; border-top: 8px solid #000; border-bottom: 0; }
.panel-close { width: 16px; height: 16px; border: 1px solid #999; background: #eee; font-size: 14px; line-height: 12px; font-weight: bold; }
.entity { height: 181px; flex: none; }
.entity-title { display: flex; align-items: center; height: 32px; margin-left: 2px; margin-right: 28px; padding-left: 9px; border-bottom: 1px solid #999; font-size: 13px; }
.toggle { width: 12px; height: 18px; }
.entity-title .toggle { margin-right: -20px; }
.entity-body { display: flex; padding: 8px 10px 0 13px; }
.thumb { width: 53px; height: 59px; border: 1px solid #999; }
.fields { display: grid; flex: 1; grid-template-columns: 1fr 119px; grid-auto-rows: 24px; row-gap: 4px; column-gap: 3px; align-items: center; }
.fields label { justify-self: end; }
.fields .off { color: #999; }
.combo, .box { height: 24px; background: #fff; border: 2px solid; border-color: #777 #fff #fff #777; }
.combo { position: relative; }
.box { width: 100%; padding: 0 2px; outline: 0; }
.box.flat, .combo.off { background: #f0f0f0; }
.combo select { appearance: none; width: 100%; height: 100%; border: 0; background: none; padding: 0 2px; outline: 0; opacity: 1; }
.combo-arrow {
  position: absolute;
  top: 0; right: 0; bottom: 0;
  display: grid;
  place-items: center;
  width: 21px;
  background: #f0f0f0;
  border: 1px solid;
  border-color: #fff #777 #777 #fff;
  pointer-events: none;
}
.combo-arrow::before { content: ""; border: 5px solid transparent; border-top-color: #000; border-bottom: 0; }
.off .combo-arrow { width: 17px; }
.off .combo-arrow::before { border-width: 3px; border-bottom: 0; border-top-color: #888; }

.material { display: flex; height: 93px; flex: none; padding: 2px 0 0 2px; border-bottom: 1px solid #888; }
.preview { width: 77px; height: 87px; border: 1px solid #999; }
.material .name { flex: 1; margin-left: 3px; color: #888; font-size: 12px; }
.mat-icons { display: flex; flex-direction: column; align-items: center; gap: 9px; width: 31px; padding-top: 4px; }
.ico16 { width: 16px; height: 16px; }
.ico18 { width: 18px; height: 18px; }
.ico20 { width: 20px; height: 20px; }
.ico22 { width: 22px; height: 22px; }
.ico26 { width: 26px; height: 26px; }

.tabs { display: flex; align-items: flex-end; height: 30px; flex: none; padding-right: 5px; font-size: 12px; line-height: 18px; }
.tab { width: 46px; height: 20px; padding-right: 14px; border-top: 1px solid #fff; border-right: 2px solid #777; }
.tab.on { width: 50px; height: 22px; border-left: 1px solid #fff; }
.tabs svg { align-self: center; }
.nav-row { display: flex; align-items: center; gap: 11px; height: 36px; flex: none; padding: 0 4px 0 9px; border-bottom: 1px solid #888; font-size: 12px; }
.nav-row .combo { flex: 1; align-self: flex-end; height: 27px; margin: 0 -2px 2px -6px; }
.nav-row button { flex: none; }
.combo.lined select { height: 20px; width: calc(100% - 26px); margin-left: 4px; padding: 0; border-bottom: 1px solid #000; }

.list { display: flex; overflow: hidden; background: #fff; }
.list.colors { flex: 1; min-height: 0; }
.list.folders { height: 34px; flex: none; }
.swatches { display: grid; flex: 1; grid-template-columns: repeat(3, 62px); grid-auto-rows: 62px; gap: 2px; padding: 3px; align-content: start; }
.swatch { border: 1px solid #999; box-shadow: inset 0 0 0 1px #fff; }
.folder { display: grid; place-items: start center; padding-top: 12px; border: 1px solid #999; background: #fff; }
.folder svg { width: 36px; height: 24px; }
.splitter { height: 10px; flex: none; border-bottom: 1px solid #999; background: linear-gradient(#f2f2f2 3px, #777 3px 5px, #f2f2f2 5px); }
.sub-head { height: 22px; flex: none; padding-left: 4px; background: #e4e4e4; border-bottom: 1px solid #999; font-size: 12px; line-height: 20px; }

.scroll { display: flex; flex-direction: column; align-items: center; width: 20px; flex: none; background: #f1f1f1; }
.knob { width: 100%; height: 21px; flex: none; background: #cdcdcd; }
.chev { width: 8px; height: 8px; flex: none; border: solid #555; border-width: 2px 0 0 2px; transform: rotate(45deg); }
.chev.up { margin: 8px 0 5px; }
.chev.down { margin: auto 0 8px; transform: rotate(225deg); }
.outer .chev.up { margin: 11px 0 5px; }

.band { position: absolute; left: 0; bottom: 0; width: calc(100% - 610px); height: 72px; background: rgba(0, 0, 0, 0.42); }
.keys {
  position: absolute;
  right: 415px;
  bottom: 8px;
  padding: 0 5px;
  border-radius: 5px;
  background: #989897;
  box-shadow: 0 0 4px 3px rgba(150, 150, 150, 0.25);
  color: #efefef;
  font: 900 32px/46px Inter, "DejaVu Sans", sans-serif;
}

/* Status bar */
.status { display: flex; align-items: center; height: 26px; flex: none; padding: 6px 5px 0 6px; background: #f2f2f2; white-space: nowrap; line-height: 20px; }
.status svg { width: 18px; height: 18px; margin-right: 17px; }
.bar { width: 1px; height: 14px; margin-right: 11px; background: #888; }
.status svg + .bar { margin-left: -5px; }
.hint { flex: 1; font-size: 17px; }
.status label { font-size: 16px; width: 40px; }
.status input { width: 250px; height: 24px; align-self: flex-end; padding: 0 3px; background: #ffffe1; border: 1px solid #abadb3; border-bottom: 0; outline: 0; }
</style>
